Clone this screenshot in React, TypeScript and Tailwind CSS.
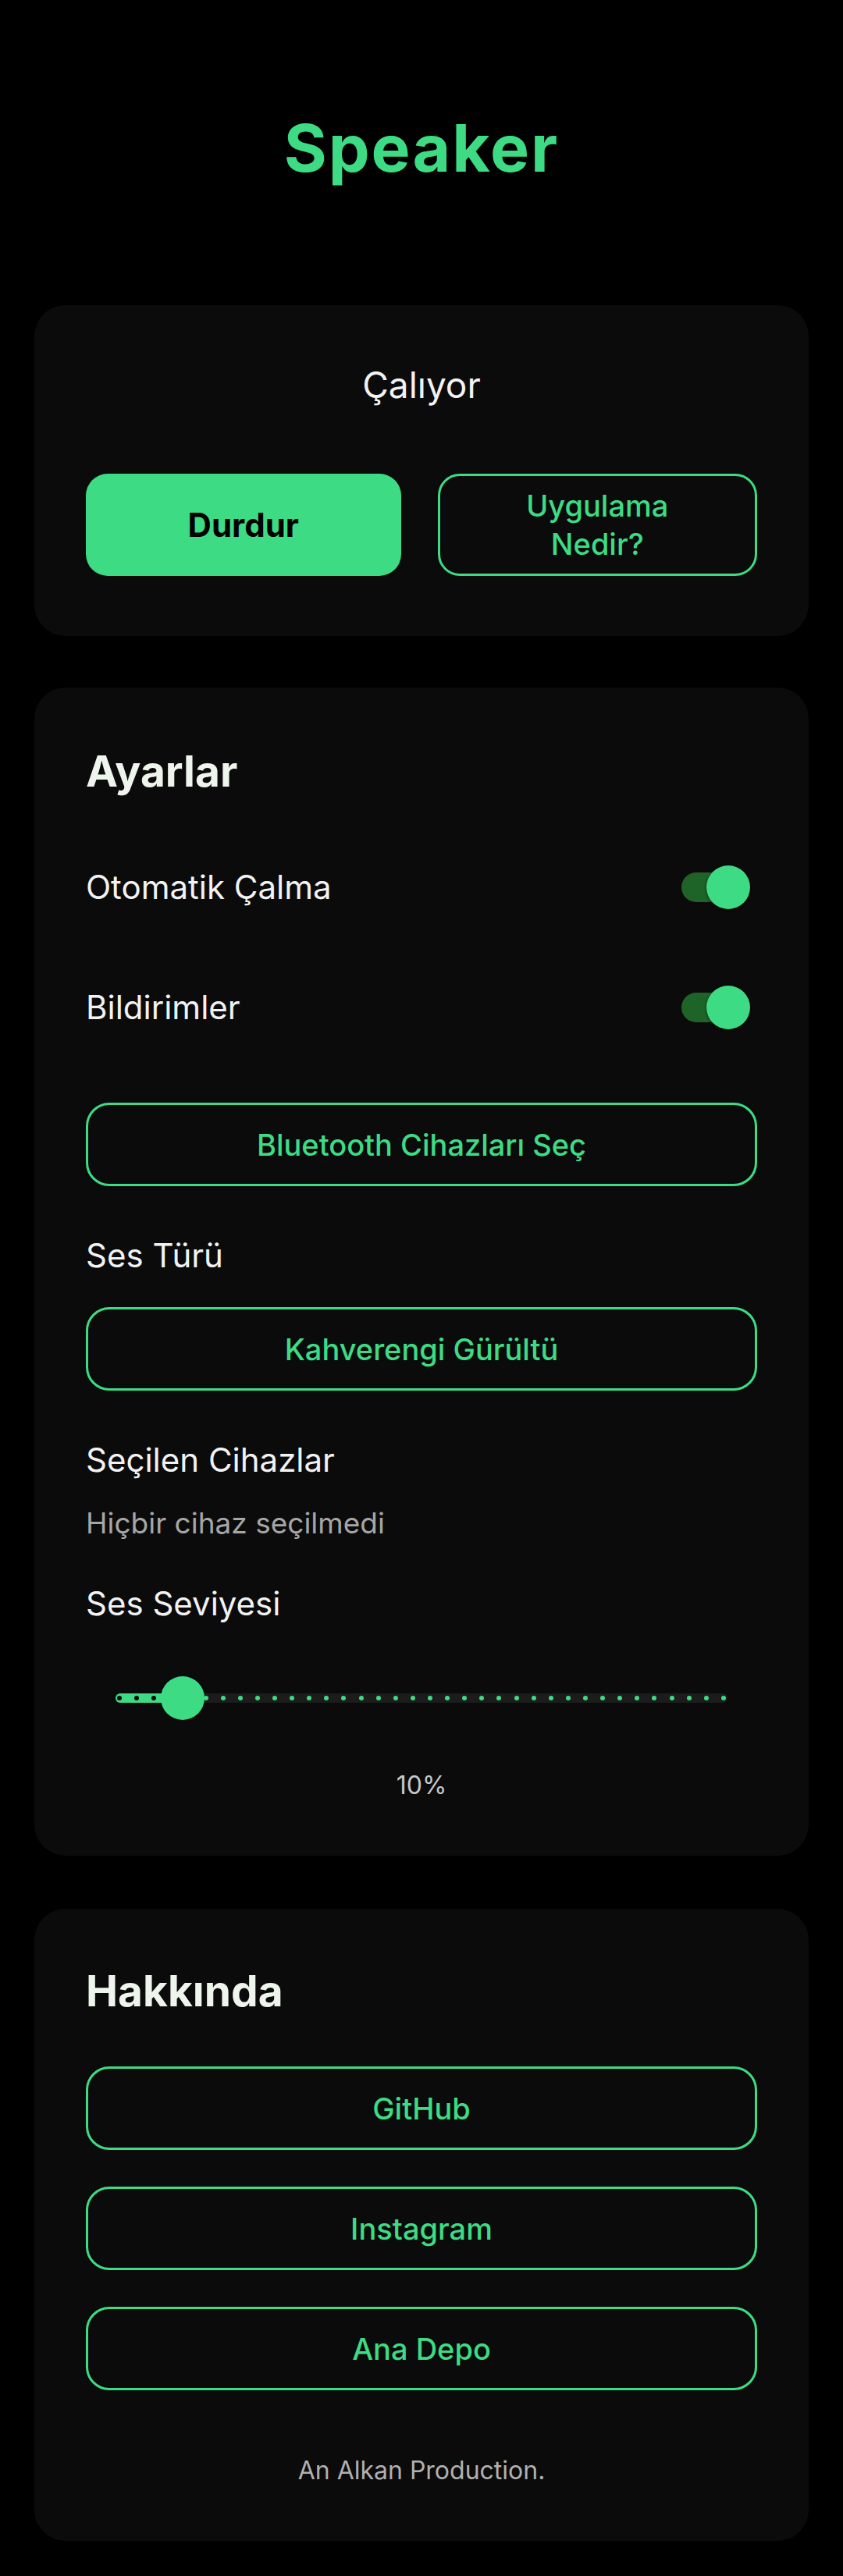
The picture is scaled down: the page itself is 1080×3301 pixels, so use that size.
import React from "react"

const TRACK_WIDTH = 784
const DOT_COUNT = 36

const Toggle = () => (
    <div className="relative w-[88px] h-[56px] mr-[9px]">
        <div className="absolute left-0 top-[9px] w-[62px] h-[38px] rounded-full bg-[#1e6328]" />
        <div className="absolute right-0 top-0 w-[56px] h-[56px] rounded-full bg-[#3ddc84] shadow-[0_1px_3px_rgba(0,0,0,0.7)]" />
    </div>
)

const OutlineButton = ({ label }: { label: string }) => (
    <button className="w-full h-[107px] rounded-[30px] border-[3px] border-[#3ddc84] text-[#3ddc84] text-[38px] font-medium leading-none">
        {label}
    </button>
)

const VolumeSlider = ({ value }: { value: number }) => {
    const center = 4 + (value / 100) * (TRACK_WIDTH - 8) + 4
    const step = (TRACK_WIDTH - 10) / (DOT_COUNT - 1)

    return (
        <div className="relative h-[56px] mx-[38px]">
            <div className="absolute left-0 right-0 top-[22px] h-[12px] rounded-full bg-[#1c1c1c]" />
            <div
                className="absolute left-0 top-[22px] h-[12px] rounded-l-full bg-[#3ddc84]"
                style={{ width: center }}
            />
            <div className="absolute left-0 right-0 top-[22px] h-[12px] flex items-center justify-between px-[2px]">
                {Array.from({ length: DOT_COUNT }).map((_, i) => (
                    <span
                        key={i}
                        className={
                            5 + i * step < center
                                ? "w-[6px] h-[6px] rounded-full bg-[#0b0b0b]"
                                : "w-[6px] h-[6px] rounded-full bg-[#3ddc84]"
                        }
                    />
                ))}
            </div>
            <div
                className="absolute top-0 w-[56px] h-[56px] rounded-full bg-[#3ddc84]"
                style={{ left: center - 28 }}
            />
        </div>
    )
}

const App = () => {
    return (
        <div className="min-h-screen bg-black px-[44px] pb-[45px] font-['Inter',sans-serif]">
            <h1 className="pt-[148px] text-center text-[84px] leading-none font-bold tracking-[2px] text-[#3ddc84]">
                Speaker
            </h1>

            {/* status */}
            <section className="mt-[159px] rounded-[40px] bg-[#0b0b0b] px-[66px] pt-[79px] pb-[77px]">
                <p className="text-center text-[46px] leading-none text-[#f2f2f2]">Çalıyor</p>
                <div className="mt-[91px] flex gap-[47px]">
                    <button className="flex-1 h-[131px] rounded-[28px] bg-[#3ddc84] text-[42px] leading-none font-bold text-black">
                        Durdur
                    </button>
                    <button className="flex-1 h-[131px] rounded-[28px] border-[3px] border-[#3ddc84] text-[38px] leading-[49px] font-medium text-[#3ddc84]">
                        Uygulama
                        <br />
                        Nedir?
                    </button>
                </div>
            </section>

            {/* settings */}
            <section className="mt-[66px] rounded-[40px] bg-[#0b0b0b] px-[66px] pt-[80px] pb-[74px]">
                <h2 className="text-[55px] leading-none font-bold text-[#eef5ec]">Ayarlar</h2>

                <div className="mt-[93px] h-[56px] flex items-center justify-between">
                    <span className="text-[42px] leading-none text-[#f2f2f2]">Otomatik Çalma</span>
                    <Toggle />
                </div>
                <div className="mt-[98px] h-[56px] flex items-center justify-between">
                    <span className="text-[42px] leading-none text-[#f2f2f2]">Bildirimler</span>
                    <Toggle />
                </div>

                <div className="mt-[94px]">
                    <OutlineButton label="Bluetooth Cihazları Seç" />
                </div>

                <p className="mt-[68px] text-[42px] leading-none text-[#f2f2f2]">Ses Türü</p>
                <div className="mt-[45px]">
                    <OutlineButton label="Kahverengi Gürültü" />
                </div>

                <p className="mt-[68px] text-[42px] leading-none text-[#f2f2f2]">Seçilen Cihazlar</p>
                <p className="mt-[41px] text-[37px] leading-none text-[#a6a6a6]">Hiçbir cihaz seçilmedi</p>

                <p className="mt-[64px] text-[42px] leading-none text-[#f2f2f2]">Ses Seviyesi</p>
                <div className="mt-[72px]">
                    <VolumeSlider value={10} />
                </div>
                <p className="mt-[68px] text-center text-[32px] leading-none text-[#c8c8c8]">10%</p>
            </section>

            {/* about */}
            <section className="mt-[68px] rounded-[40px] bg-[#0b0b0b] px-[66px] pt-[78px] pb-[74px]">
                <h2 className="text-[55px] leading-none font-bold text-[#eef5ec]">Hakkında</h2>
                <div className="mt-[69px] flex flex-col gap-[47px]">
                    <OutlineButton label="GitHub" />
                    <OutlineButton label="Instagram" />
                    <OutlineButton label="Ana Depo" />
                </div>
                <p className="mt-[87px] text-center text-[32px] leading-none text-[#b0b0b0]">
                    An Alkan Production.
                </p>
            </section>
        </div>
    )
}

export default App
